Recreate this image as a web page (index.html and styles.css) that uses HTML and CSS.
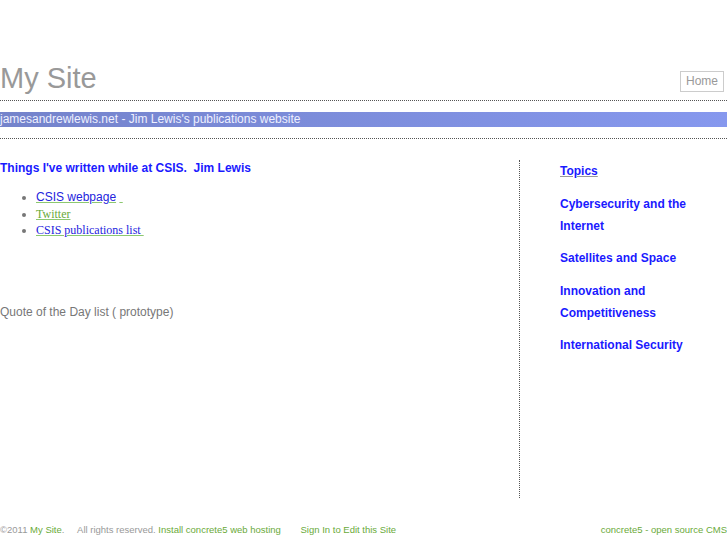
FILE: index.html
```html
<!DOCTYPE html>
<html>
<head>
<meta charset="utf-8">
<title>My Site</title>
<link rel="stylesheet" href="styles.css">
</head>
<body>
<div class="page">
  <header class="header">
    <h1 class="site-title">My Site</h1>
    <nav class="nav"><a class="nav-home" href="#">Home</a></nav>
  </header>
  <div class="tagline-wrap">
    <div class="tagline">jamesandrewlewis.net - Jim Lewis's publications website</div>
  </div>
  <div class="main">
    <div class="content">
      <h2 class="content-heading">Things I've written while at CSIS.&nbsp; Jim Lewis</h2>
      <ul class="links">
        <li><a class="lnk sans" href="#">CSIS webpage</a> <a class="lnk sans" href="#">&nbsp;</a></li>
        <li><a class="lnk serif green" href="#">Twitter</a></li>
        <li><a class="lnk serif" href="#">CSIS publications list&nbsp;</a></li>
      </ul>
      <p class="quote">Quote of the Day list ( prototype)</p>
    </div>
    <aside class="sidebar">
      <p class="topic topic-head"><a href="#">Topics</a></p>
      <p class="topic">Cybersecurity and the Internet</p>
      <p class="topic">Satellites and Space</p>
      <p class="topic">Innovation and Competitiveness</p>
      <p class="topic">International Security</p>
    </aside>
  </div>
  <footer class="footer">
    <div class="footer-left">
      <span>&copy;2011 <a href="#">My Site</a>.</span>
      <span class="gap1">All rights reserved.</span>
      <a href="#">Install concrete5 web hosting</a>
      <a class="gap2" href="#">Sign In to Edit this Site</a>
    </div>
    <div class="footer-right"><a href="#">concrete5 - open source CMS</a></div>
  </footer>
</div>
</body>
</html>
```
FILE: styles.css
```css
html, body {
  margin: 0;
  padding: 0;
  background: #fff;
}
body {
  font-family: "Liberation Sans", Arial, sans-serif;
  font-size: 12px;
  color: #777;
}
.page {
  width: 727px;
  overflow: hidden;
}
.header {
  display: flex;
  justify-content: space-between;
  align-items: flex-end;
  padding-top: 62px;
  padding-bottom: 6px;
  border-bottom: 1px dotted #555;
}
.site-title {
  margin: 0;
  font-size: 29px;
  line-height: 32px;
  font-weight: normal;
  color: #999;
}
.nav {
  margin-bottom: 2px;
  margin-right: 3px;
}
.nav-home {
  display: block;
  border: 1px solid #ccc;
  padding: 0 5px;
  line-height: 19px;
  color: #999;
  text-decoration: none;
  font-size: 12px;
}
.tagline-wrap {
  padding: 11px 0 11px;
  border-bottom: 1px dotted #555;
}
.tagline {
  height: 15px;
  line-height: 15px;
  background: linear-gradient(to right, #7483cb, #8698ee);
  color: #eef0ff;
  font-size: 12px;
}
.main {
  display: flex;
  margin-top: 21px;
}
.content {
  width: 520px;
  min-height: 338px;
  padding-top: 1px;
  border-right: 1px dotted #555;
  box-sizing: border-box;
}
.content-heading {
  margin: 0;
  font-size: 12px;
  line-height: 14px;
  font-weight: bold;
  color: #1a1aff;
}
.links {
  margin: 14px 0 0;
  padding-left: 36px;
  color: #777;
}
.links li {
  line-height: 16.5px;
}
.lnk {
  color: #2424dd;
  text-decoration: underline;
  text-decoration-color: #8cc870;
}
.sans {
  font-family: "Liberation Sans", Arial, sans-serif;
  font-size: 12px;
}
.serif {
  font-family: "Liberation Serif", "Times New Roman", serif;
  font-size: 12px;
}
.green {
  color: #6aaa3a;
}
.quote {
  margin: 66px 0 0;
  line-height: 14px;
  color: #777;
  font-size: 12px;
}
.sidebar {
  padding-left: 40px;
  padding-top: 1px;
  width: 150px;
}
.topic {
  margin: 0 0 10.5px;
  line-height: 22px;
  font-weight: bold;
  color: #1a1aff;
  font-size: 12px;
}
.topic-head {
  margin-top: -1px;
}
.topic-head a {
  color: #1a1aff;
  text-decoration: underline;
  text-decoration-color: #999;
}
.footer {
  display: flex;
  justify-content: space-between;
  margin-top: 26px;
  font-size: 9.5px;
  line-height: 12px;
  color: #999;
}
.footer a {
  color: #6aaa3a;
  text-decoration: none;
}
.gap1 {
  margin-left: 10px;
}
.gap2 {
  margin-left: 17px;
}
.footer-right {
  text-align: right;
}
```
